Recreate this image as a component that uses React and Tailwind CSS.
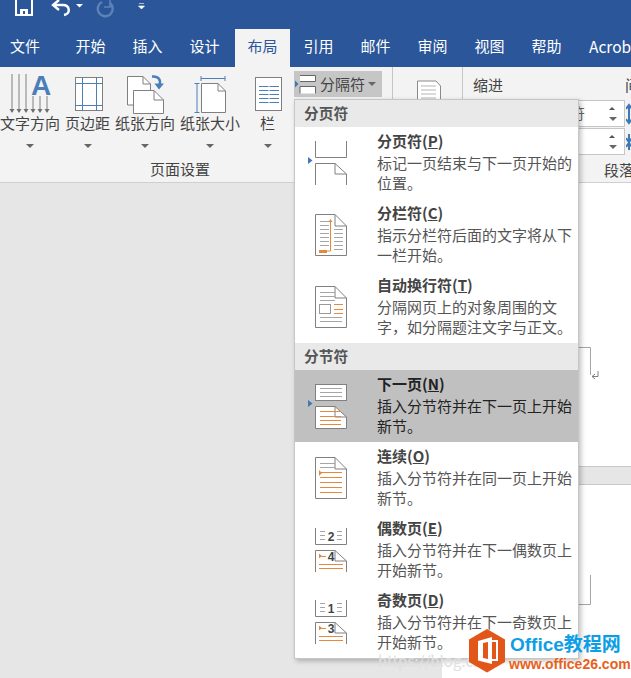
const font = { fontFamily: '"Noto Sans CJK SC", "Liberation Sans", sans-serif' };

const tabs = ["开始", "插入", "设计", "布局", "引用", "邮件", "审阅", "视图", "帮助"];

const Marker = ({ y = 30, fill = "#3f78b5" }) => (
  <path d={`M2 ${y} L6.5 ${y + 3.5} L2 ${y + 7}Z`} fill={fill} />
);

const Lines = ({ ys, x1 = 14, x2 = 35, color = "#a6a6a6" }) => (
  <>
    {ys.map((y) => (
      <path key={y} d={`M${x1} ${y + 0.5}H${x2}`} stroke={color} fill="none" />
    ))}
  </>
);

const DOC = "M9.5 15.5H29L40.5 27V56.5H9.5Z";

const PageBreakIcon = () => (
  <>
    <path d="M9.5 14V30.5H40.5V14M9.5 58V36.5H29L40.5 47V58" fill="none" stroke="#808080" />
    <path d="M29 36.5V47H40.5" fill="none" stroke="#808080" />
    <Marker />
  </>
);

const ColumnIcon = () => (
  <>
    <path d={DOC} fill="#fff" stroke="#808080" />
    <path d="M29 15.5V27H40.5" fill="none" stroke="#808080" />
    <Lines ys={[22, 26, 30, 34, 38, 42, 46]} x1={14} x2={23} />
    <Lines ys={[30, 34, 38, 42, 46, 50]} x1={28} x2={37} />
    <path d="M24.5 23V52H13" fill="none" stroke="#e48a3e" />
    <path d="M13 51h8v3h-8z" fill="#e48a3e" />
    <path d="M24.5 20l2 3h-4z" fill="#e48a3e" />
  </>
);

const WrapIcon = () => (
  <>
    <path d={DOC} fill="#fff" stroke="#808080" />
    <path d="M29 15.5V27H40.5" fill="none" stroke="#808080" />
    <Lines ys={[21, 25, 29]} x1={14} x2={29} />
    <Lines ys={[46, 50]} x1={14} x2={36} />
    <rect x="13.5" y="33.5" width="11" height="9" fill="#fff" stroke="#9a9a9a" />
    <Lines ys={[33, 38, 42]} x1={28} x2={37} color="#e48a3e" />
  </>
);

const NextPageIcon = () => (
  <>
    <rect x="9.5" y="14.5" width="31" height="16" fill="#fff" stroke="#808080" />
    <Lines ys={[18, 22, 26]} x1={14} x2={36} />
    <path d="M9.5 36.5H29L40.5 47V58.5H9.5Z" fill="#fff" stroke="#808080" />
    <path d="M29 36.5V47H40.5" fill="none" stroke="#808080" />
    <Lines ys={[41, 46, 50, 54]} x1={14} x2={35} color="#e48a3e" />
    <Marker />
  </>
);

const ContinuousIcon = () => (
  <>
    <path d={DOC} fill="#fff" stroke="#808080" />
    <path d="M29 15.5V27H40.5" fill="none" stroke="#808080" />
    <Lines ys={[21, 25]} x1={14} x2={29} />
    <Lines ys={[30, 35, 40, 45, 50]} x1={14} x2={36} color="#e48a3e" />
    <path d="M13 28l3 3-3 3z" fill="#e48a3e" />
  </>
);

const NumberIcon = ({ top, bottom }) => (
  <>
    <path d="M9.5 14V30.5H40.5V14" fill="none" stroke="#808080" />
    <Lines ys={[17, 21, 25]} x1={14} x2={36} />
    <rect x="19" y="15" width="12" height="14" fill="#fff" />
    <text x="25" y="27" textAnchor="middle" fontSize="12" fontWeight="700" fill="#444" fontFamily="Liberation Sans">{top}</text>
    <path d="M9.5 58V36.5H29L40.5 47V58" fill="none" stroke="#808080" />
    <path d="M29 36.5V47H40.5" fill="none" stroke="#808080" />
    <Lines ys={[42]} x1={14} x2={20} color="#e48a3e" />
    <Lines ys={[50, 54]} x1={13} x2={37} color="#e48a3e" />
    <path d="M13 39.5l3 2.5-3 2.5z" fill="#e48a3e" />
    <text x="25" y="47" textAnchor="middle" fontSize="12" fontWeight="700" fill="#444" fontFamily="Liberation Sans">{bottom}</text>
  </>
);

const pageBreaks = [
  { title: "分页符", key: "P", desc: "标记一页结束与下一页开始的位置。", icon: <PageBreakIcon /> },
  { title: "分栏符", key: "C", desc: "指示分栏符后面的文字将从下一栏开始。", icon: <ColumnIcon /> },
  { title: "自动换行符", key: "T", desc: "分隔网页上的对象周围的文字，如分隔题注文字与正文。", icon: <WrapIcon /> },
];

const sectionBreaks = [
  { title: "下一页", key: "N", desc: "插入分节符并在下一页上开始新节。", icon: <NextPageIcon />, active: true },
  { title: "连续", key: "O", desc: "插入分节符并在同一页上开始新节。", icon: <ContinuousIcon /> },
  { title: "偶数页", key: "E", desc: "插入分节符并在下一偶数页上开始新节。", icon: <NumberIcon top="2" bottom="4" /> },
  { title: "奇数页", key: "D", desc: "插入分节符并在下一奇数页上开始新节。", icon: <NumberIcon top="1" bottom="3" /> },
];

const MenuHeader = ({ children }) => (
  <div className="h-[27px] bg-[#e9e9e9] pl-[9px] text-[14.7px] leading-[25px] font-bold text-[#555]">{children}</div>
);

const MenuItem = ({ item }) => (
  <div className={`flex h-[72px] ${item.active ? "bg-[#c0c0c0] text-[#222]" : "text-[#555]"}`}>
    <svg width="44" height="72" className="ml-[11px] shrink-0">{item.icon}</svg>
    <div className="ml-[27px] w-[197px] pt-[4px] text-[15px] leading-[20px]">
      <div className={`font-bold ${item.active ? "text-[#222]" : "text-[#444]"}`}>
        {item.title}(<span className="underline">{item.key}</span>)
      </div>
      <div className="mt-[2px]">{item.desc}</div>
    </div>
  </div>
);

const Caret = () => <div className="h-0 w-0 border-x-[4px] border-t-[4px] border-x-transparent border-t-[#666]" />;

const RibbonButton = ({ label, width, icon }) => (
  <div className={`flex flex-col items-center ${width}`}>
    <svg width="54" height="44" viewBox="0 0 54 44" className="mt-[5px]">{icon}</svg>
    <div className="mt-[-4px] text-[15px] leading-[22px] whitespace-nowrap text-[#444]">{label}</div>
    <div className="mt-[10px]"><Caret /></div>
  </div>
);

const downArrow = (x, y1, y2) => (
  <g key={x}>
    <path d={`M${x} ${y1}V${y2}`} stroke="#808080" />
    <path d={`M${x - 2.5} ${y2 - 3}L${x} ${y2 + 1}L${x + 2.5} ${y2 - 3}Z`} fill="#707070" />
  </g>
);

const TextDirIcon = (
  <>
    {[9, 16, 23].map((x) => downArrow(x, 2, 40))}
    {[30, 37, 44].map((x) => downArrow(x, 24, 40))}
    <text x="38" y="23" textAnchor="middle" fontSize="28" fontWeight="700" fill="#4a7fb8" fontFamily="Liberation Sans">A</text>
  </>
);

const MarginIcon = (
  <>
    <rect x="14.5" y="5.5" width="27" height="33" fill="#fff" stroke="#808080" />
    <path d="M14 11.5H42M14 33.5H42M21.5 5V39M35.5 5V39" fill="none" stroke="#4a7fb8" />
  </>
);

const OrientationIcon = (
  <>
    <path d="M9.5 4.5H25L32.5 12V33H9.5Z" fill="#fff" stroke="#808080" />
    <path d="M25 4.5V12H32.5" fill="none" stroke="#808080" />
    <path d="M15.5 18.5H36L45.5 28V41.5H15.5Z" fill="#fff" stroke="#808080" />
    <path d="M36 18.5V28H45.5" fill="none" stroke="#808080" />
    <path d="M34 4.5C41 4 43 8 41.5 13" fill="none" stroke="#4a7fb8" strokeWidth="2.5" />
    <path d="M36.5 11.5H46L41 17.5Z" fill="#4a7fb8" />
  </>
);

const SizeIcon = (
  <>
    <path d="M18 6.5H42M18 4V9M42 4V9M11.5 11.5H16.5M11.5 40.5H16.5M14 11.5V40.5" fill="none" stroke="#4a7fb8" />
    <path d="M18.5 11.5H35L42.5 19V40.5H18.5Z" fill="#fff" stroke="#808080" />
    <path d="M35 11.5V19H42.5" fill="none" stroke="#808080" />
  </>
);

const ColumnsIcon = (
  <>
    <rect x="14.5" y="5.5" width="26" height="33" fill="#fff" stroke="#808080" />
    <path d="M18 14.5H38M18 18.5H38M18 22.5H38M18 26.5H38M18 30.5H38" stroke="#4a7fb8" />
    <path d="M28 14V31" stroke="#fff" strokeWidth="1" />
  </>
);

const Spinner = ({ children }) => (
  <div className="flex h-[27px] items-center justify-between border border-[#c6c6c6] bg-white pr-[7px] pl-[31px] text-[#666]">
    <span>{children}</span>
    <div className="flex flex-col gap-[7px]">
      <div className="h-0 w-0 border-x-[3px] border-b-[3px] border-x-transparent border-b-[#555]" />
      <Caret />
    </div>
  </div>
);

export default function App() {
  return (
    <div className="relative h-[678px] w-[631px] overflow-hidden bg-[#e6e6e6]" style={font}>
      {/* title bar + tabs */}
      <div className="h-[67px] bg-[#2b579a]">
        <div className="flex h-[29px]">
          <svg width="160" height="29">
            <path d="M16 0V15H32V0" fill="none" stroke="#fff" strokeWidth="2" />
            <path d="M20 9h8v6h-8z" fill="#fff" />
            <path d="M23 11h2v3h-2z" fill="#2b579a" />
            <path d="M54 5H63C70 5 71 14 64 15" fill="none" stroke="#fff" strokeWidth="2.4" />
            <path d="M59 0L53 5L59 10" fill="none" stroke="#fff" strokeWidth="2.4" />
            <path d="M76 4h7l-3.5 3.5z" fill="#fff" />
            <path d="M110 3A7.5 7.5 0 1 1 102 2" fill="none" stroke="#5f83b8" strokeWidth="2.4" />
            <path d="M110 0V7H104" fill="none" stroke="#5f83b8" strokeWidth="1.6" />
            <path d="M139 3.5h5M138.5 6h6l-3 3z" fill="#fff" stroke="#fff" strokeWidth="0.6" />
          </svg>
        </div>
        <div className="flex h-[38px] text-[15px] leading-[34px] whitespace-nowrap text-white">
          <div className="w-[62px] shrink-0 pl-[10px]">文件</div>
          {tabs.map((tab) => (
            <div key={tab} className={tab === "布局" ? "ml-[2px] w-[55px] shrink-0 bg-[#f3f3f3] text-center text-[#2b579a]" : "w-[57px] shrink-0 text-center"}>
              {tab}
            </div>
          ))}
          <div className="shrink-0 pl-[14px] text-[15.5px]">Acrobat</div>
        </div>
      </div>

      {/* ribbon */}
      <div className="flex h-[116px] border-b border-[#d0d0d0] bg-[#f3f3f3]">
        <div className="w-[292px] shrink-0">
          <div className="flex h-[91px]">
            <RibbonButton label="文字方向" width="w-[60px]" icon={TextDirIcon} />
            <RibbonButton label="页边距" width="w-[55px]" icon={MarginIcon} />
            <RibbonButton label="纸张方向" width="w-[60px]" icon={OrientationIcon} />
            <RibbonButton label="纸张大小" width="w-[70px]" icon={SizeIcon} />
            <RibbonButton label="栏" width="w-[45px]" icon={ColumnsIcon} />
          </div>
          <div className="pl-[150px] text-[15px] leading-[22px] text-[#444]">页面设置</div>
        </div>
        <div className="w-[101px] shrink-0 border-r border-[#c6c6c6] pt-[4px] pl-[2px]">
          <div className="flex h-[26px] w-[88px] items-center gap-[3px] bg-[#c6c6c6] text-[15px] text-[#444]">
            <svg width="23" height="26">
              <path d="M6 4.5H21.5V10.5H6M6 22.5V15.5H21.5V22.5" fill="#fff" stroke="#666" />
              <path d="M1 9.5l3.5 3.5-3.5 3.5z" fill="#3f78b5" />
            </svg>
            <span>分隔符</span>
            <Caret />
          </div>
        </div>
        <div className="w-[70px] shrink-0 border-r border-[#c6c6c6]">
          <svg width="69" height="40" className="mt-[12px]">
            <path d="M24.5 2H43L47.5 7V40H24.5Z" fill="#fff" stroke="#8a8a8a" />
            <path d="M28 7H43M28 11H43M28 15H43M28 19H43" stroke="#b5b5b5" />
          </svg>
        </div>
        <div className="relative flex-1 pl-[10px] text-[15px] text-[#444]">
          <div className="flex h-[33px] items-center justify-between whitespace-nowrap pt-[4px]">
            <span>缩进</span>
            <span className="mr-[-21px]">间距</span>
          </div>
          <div className="flex flex-col gap-px pr-[9px] pl-[50px]">
            <Spinner>字符</Spinner>
            <Spinner />
          </div>
          <div className="mt-[4px] pl-[131px] leading-[22px] whitespace-nowrap">段落</div>
          <svg width="8" height="56" className="absolute top-[33px] right-0">
            <path d="M3 6V14M3 22V14M0 9l3-4 3 4M0 19l3 4 3-4" fill="none" stroke="#3f78b5" strokeWidth="2" />
            <path d="M3 34V42M3 50V42M0 38l3 4 3-4M0 47l3-4 3 4" fill="none" stroke="#3f78b5" strokeWidth="2" />
          </svg>
        </div>
      </div>

      {/* document */}
      <div className="flex">
        <div className="w-[442px] shrink-0" />
        <div className="relative flex-1">
          <div className="h-[283px] bg-white" />
          <div className="h-[19px] border-y border-[#c8c8c8] bg-[#e6e6e6]" />
          <div className="h-[195px] bg-white" />
          <svg width="189" height="460" className="absolute top-0 left-0">
            <path d="M130 164.5H148.5V192M130 421.5H148.5V392" fill="none" stroke="#a6a6a6" />
            <path d="M156 188V193.5H150M153 191l-3 2.5 3 2.5" fill="none" stroke="#808080" />
          </svg>
        </div>
      </div>

      {/* dropdown menu */}
      <div className="absolute top-[99px] left-[294px] w-[285px] border border-[#c6c6c6] bg-white shadow-[2px_2px_5px_rgba(0,0,0,0.25)]">
        <MenuHeader>分页符</MenuHeader>
        {pageBreaks.map((item) => <MenuItem key={item.key} item={item} />)}
        <MenuHeader>分节符</MenuHeader>
        {sectionBreaks.map((item) => <MenuItem key={item.key} item={item} />)}
      </div>

      {/* watermarks */}
      <div className="absolute top-[650px] left-[378px] text-[15px] whitespace-nowrap text-[#e0e0e0]">https://blog.csdn</div>
      <div className="absolute top-[629px] left-[468px] flex items-start">
        <svg width="38" height="44" viewBox="0 0 38 44">
          <path d="M19 0L37 10.5V33L19 43.5L1 33V10.5Z" fill="#e2561a" />
          <path d="M10 12L24 8V35L10 31.5Z M15 14V29L20 30V13Z" fill="#fff" fillRule="evenodd" />
          <path d="M24 12H29V31H24" fill="none" stroke="#fff" strokeWidth="2" />
        </svg>
        <div className="mt-[4px] ml-[3px] flex flex-col font-bold whitespace-nowrap" style={{ fontFamily: '"Liberation Sans", "Noto Sans CJK SC", sans-serif' }}>
          <div className="pl-[1px] text-[19px] leading-[24px] text-[#0e9ee6] [text-shadow:0_0_2px_#fff]">Office教程网</div>
          <div className="text-[14px] leading-[14px] text-[#e8611c] [text-shadow:0_0_2px_#fff]">www.office26.com</div>
        </div>
      </div>
    </div>
  );
}
